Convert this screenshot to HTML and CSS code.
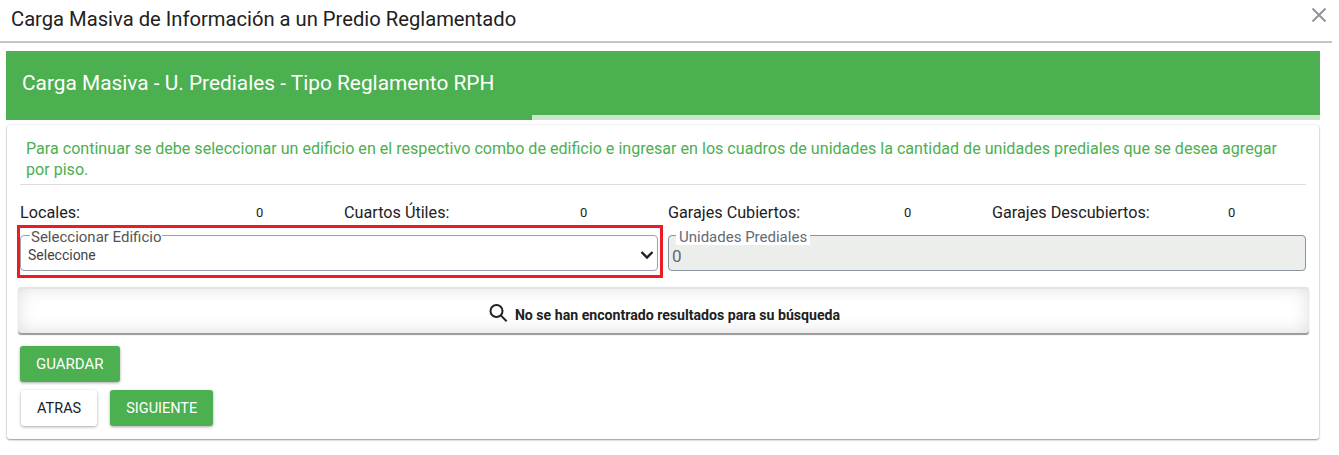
FILE: index.html
```html
<!DOCTYPE html>
<html lang="es">
<head>
  <meta charset="UTF-8" />
  <title>Carga Masiva</title>
  <link rel="stylesheet" href="styles.css">
</head>
<body>

  <div class="modal">

    <!-- Modal header -->
    <div class="modal-header">
      <h1>Carga Masiva de Información a un Predio Reglamentado</h1>
      <svg class="close-icon" width="14" height="14" viewBox="0 0 14 14"><path d="M0.5 0.5L13.5 13.5M13.5 0.5L0.5 13.5" /></svg>
    </div>

    <!-- Green step bar -->
    <div class="step-bar">
      <h2>Carga Masiva - U. Prediales - Tipo Reglamento RPH</h2>
      <div class="step-progress"></div>
    </div>

    <div class="card">
      <p class="hint">Para continuar se debe seleccionar un edificio en el respectivo combo de edificio e ingresar en los cuadros de unidades la cantidad de unidades prediales que se desea agregar por piso.</p>
      <hr>

      <div class="stats">
        <div class="stat"><span class="stat-label">Locales:</span><span class="stat-value">0</span></div>
        <div class="stat"><span class="stat-label">Cuartos Útiles:</span><span class="stat-value">0</span></div>
        <div class="stat"><span class="stat-label">Garajes Cubiertos:</span><span class="stat-value">0</span></div>
        <div class="stat"><span class="stat-label">Garajes Descubiertos:</span><span class="stat-value">0</span></div>
      </div>

      <div class="fields">
        <fieldset class="field">
          <legend>Seleccionar Edificio</legend>
          <div class="select-value">
            <span>Seleccione</span>
            <svg width="14" height="10" viewBox="0 0 14 10"><path d="M1.5 2L7 7.5L12.5 2" /></svg>
          </div>
        </fieldset>
        <fieldset class="field field-disabled">
          <legend>Unidades Prediales</legend>
          <div class="input-value">0</div>
        </fieldset>
        <div class="highlight"></div>
      </div>

      <div class="empty-panel">
        <svg width="19" height="18" viewBox="0 0 19 18"><circle cx="7.5" cy="7" r="6" /><path d="M11.8 11.4L17.6 17.2" /></svg>
        <span>No se han encontrado resultados para su búsqueda</span>
      </div>

      <div class="btn-row"><button class="btn btn-green">GUARDAR</button></div>
      <div class="btn-row btn-row-nav">
        <button class="btn btn-white">ATRAS</button>
        <button class="btn btn-green">SIGUIENTE</button>
      </div>
    </div>

  </div>

</body>
</html>
```

FILE: styles.css
```css
* {
  box-sizing: border-box;
}

html, body {
  height: 455px;
  overflow: hidden;
}

body {
  margin: 0;
  background: #fff;
  font-family: Roboto, "Liberation Sans", sans-serif;
  color: #212529;
}

.modal {
  width: 1332px;
}

.modal-header {
  display: flex;
  justify-content: space-between;
  height: 43px;
  padding: 7px 6px 0 11px;
  border-bottom: 2px solid #c4c4c4;
}

.modal-header h1 {
  margin: 0;
  font-size: 20.2px;
  font-weight: 400;
  line-height: 24px;
  color: #212121;
}

.close-icon {
  margin-top: 1px;
}

.close-icon path {
  fill: none;
  stroke: #8f959c;
  stroke-width: 2;
}

.step-bar {
  position: relative;
  height: 69px;
  margin: 8px 12px 0 6px;
  padding: 20px 16px 0;
  background: #4caf50;
}

.step-bar h2 {
  margin: 0;
  font-size: 20.85px;
  font-weight: 400;
  line-height: 24px;
  color: #fff;
}

.step-progress {
  position: absolute;
  right: 0;
  bottom: 0;
  width: 788px;
  height: 5px;
  background: #c8e6c9;
}

.card {
  height: 314px;
  margin: 5px 13px 0 7px;
  padding: 13px 13px 0;
  background: #fff;
  border-radius: 3px;
  box-shadow: 0 1px 2px rgba(0, 0, 0, 0.4), 0 0 2px rgba(0, 0, 0, 0.12);
}

.hint {
  margin: 0;
  padding: 0 20px 0 6px;
  font-size: 16.1px;
  line-height: 21px;
  color: #4caf50;
}

hr {
  height: 1px;
  margin: 4px 0 0;
  border: 0;
  background: #ddd;
}

.stats {
  display: grid;
  grid-template-columns: repeat(4, 324px);
  margin-top: 16px;
  height: 22px;
  align-items: center;
}

.stat {
  display: grid;
  grid-template-columns: 236px 1fr;
  align-items: center;
}

.stat-label {
  font-size: 16.2px;
  color: #212121;
}

.stat-value {
  font-size: 13px;
  color: #212121;
}

.fields {
  position: relative;
  display: grid;
  grid-template-columns: 638px 638px;
  gap: 10px;
  margin-top: 3px;
}

.field {
  height: 45px;
  min-width: 0;
  margin: 0;
  padding: 0 8px;
  border: 1px solid #9aa0ac;
  border-radius: 4px;
}

.field legend {
  margin-left: 1px;
  padding: 4px 1px 0;
  font-size: 15px;
  line-height: 15px;
  color: #555;
}

.select-value {
  display: flex;
  justify-content: space-between;
  align-items: center;
  height: 20px;
  margin: 0 -4px 0 -1px;
  font-size: 14px;
  color: #444;
}

.select-value svg {
  margin-right: -1px;
}

.select-value path {
  fill: none;
  stroke: #212121;
  stroke-width: 2.4;
}

.field-disabled {
  padding: 0 3px;
  background: #eceeec;
  border-color: #8a949c;
}

.field-disabled legend {
  margin-left: 4px;
  padding: 4px 3px 0;
  background: #fff;
  color: #5f6b75;
}

.input-value {
  margin-top: 1px;
  font-size: 17px;
  line-height: 20px;
  color: #5f6b75;
}

/* red mark around the building combo */
.highlight {
  position: absolute;
  top: -1px;
  left: -3px;
  width: 646px;
  height: 53px;
  border: 3px solid #ed1c24;
}

.empty-panel {
  display: flex;
  justify-content: center;
  align-items: center;
  gap: 7px;
  height: 46px;
  margin: 16px -3px 0 -2px;
  padding: 10px 0 0 2px;
  border-radius: 3px;
  background: #fff;
  box-shadow: inset 0 2px 1px #e4e4e4, inset 0 0 18px rgba(0, 0, 0, 0.14), 0 2px 1px rgba(0, 0, 0, 0.4);
  font-size: 14.13px;
  font-weight: 700;
  color: #212121;
}

.empty-panel svg {
  margin-top: -5px;
}

.empty-panel circle,
.empty-panel path {
  fill: none;
  stroke: #212121;
  stroke-width: 2;
}

.btn-row {
  margin-top: 13px;
}

.btn-row-nav {
  display: flex;
  gap: 13px;
  margin-top: 8px;
  padding-left: 1px;
}

.btn {
  height: 36px;
  padding: 0 16px;
  border: 0;
  border-radius: 3px;
  font-family: inherit;
  font-size: 15px;
  box-shadow: 0 1px 3px rgba(0, 0, 0, 0.35);
}

.btn-row-nav .btn {
  font-size: 14.5px;
}

.btn-green {
  background: #4caf50;
  color: #fff;
}

.btn-white {
  background: #fff;
  color: #212121;
}
```
